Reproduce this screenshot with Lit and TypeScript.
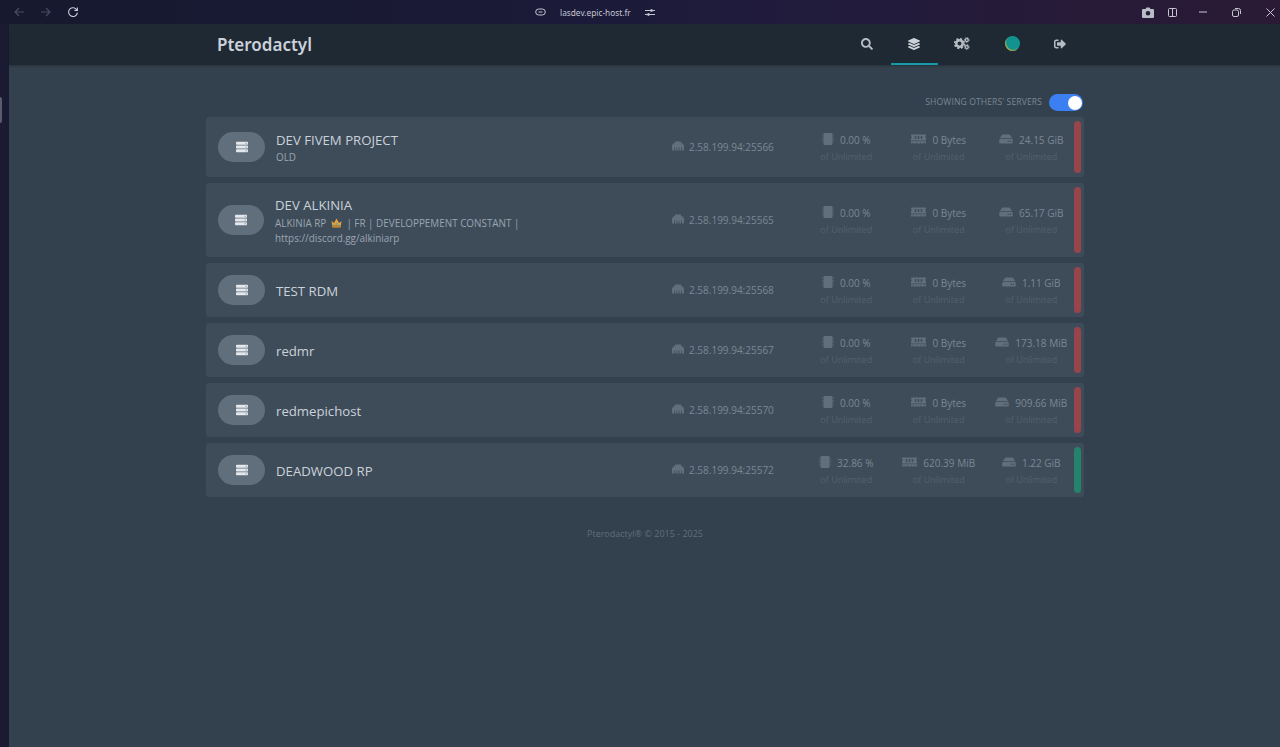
import { LitElement, html, css, svg } from "lit";
import { customElement } from "lit/decorators.js";

const P = {
  search: "M505 442.7L405.3 343c-4.5-4.5-10.6-7-17-7H372c27.6-35.3 44-79.7 44-128C416 93.1 322.9 0 208 0S0 93.1 0 208s93.1 208 208 208c48.3 0 92.7-16.4 128-44v16.3c0 6.4 2.5 12.5 7 17l99.7 99.7c9.4 9.4 24.6 9.4 33.9 0l28.3-28.3c9.4-9.4 9.4-24.6.1-34zM208 336c-70.7 0-128-57.2-128-128 0-70.7 57.2-128 128-128 70.7 0 128 57.2 128 128 0 70.7-57.2 128-128 128z",
  layers: "M12.41 148.02l232.94 105.67c6.8 3.09 14.49 3.09 21.29 0l232.94-105.67c16.55-7.51 16.55-32.52 0-40.03L266.65 2.31a25.607 25.607 0 0 0-21.29 0L12.41 107.98c-16.55 7.51-16.55 32.53 0 40.04zm487.18 88.28l-58.09-26.33-161.64 73.27c-7.56 3.43-15.59 5.17-23.86 5.17s-16.29-1.74-23.86-5.17L70.51 209.97l-58.1 26.33c-16.55 7.5-16.55 32.5 0 40l232.94 105.59c6.8 3.08 14.49 3.08 21.29 0L499.59 276.3c16.55-7.5 16.55-32.5 0-40zm0 127.8l-57.87-26.23-161.86 73.37c-7.56 3.43-15.59 5.17-23.86 5.17s-16.29-1.74-23.86-5.17L70.29 337.87 12.41 364.1c-16.55 7.5-16.55 32.5 0 40l232.94 105.59c6.8 3.08 14.49 3.08 21.29 0L499.59 404.1c16.55-7.5 16.55-32.5 0-40z",
  signout: "M497 273L329 441c-15 15-41 4.5-41-17v-96H152c-13.3 0-24-10.7-24-24v-96c0-13.3 10.7-24 24-24h136V88c0-21.4 25.9-32 41-17l168 168c9.3 9.4 9.3 24.6 0 34zM192 436v-40c0-6.6-5.4-12-12-12H96c-17.7 0-32-14.3-32-32V160c0-17.7 14.3-32 32-32h84c6.6 0 12-5.4 12-12V76c0-6.6-5.4-12-12-12H96c-53 0-96 43-96 96v192c0 53 43 96 96 96h84c6.6 0 12-5.4 12-12z",
  ethernet: "M496 192h-48v-48c0-8.8-7.2-16-16-16h-48V80c0-8.8-7.2-16-16-16H144c-8.8 0-16 7.2-16 16v48H80c-8.8 0-16 7.2-16 16v48H16c-8.8 0-16 7.2-16 16v224c0 8.8 7.2 16 16 16h80V320h32v128h64V320h32v128h64V320h32v128h64V320h32v128h80c8.8 0 16-7.2 16-16V208c0-8.8-7.2-16-16-16z",
  memory: "M640 130.94V96c0-17.67-14.33-32-32-32H32C14.33 64 0 78.33 0 96v34.94c18.6 6.61 32 24.19 32 45.06s-13.4 38.45-32 45.06V320h640v-98.94c-18.6-6.61-32-24.19-32-45.06s13.4-38.45 32-45.06zM224 256h-64V128h64v128zm128 0h-64V128h64v128zm128 0h-64V128h64v128zM0 448h64v-26.67c0-8.84 7.16-16 16-16s16 7.16 16 16V448h128v-26.67c0-8.84 7.16-16 16-16s16 7.16 16 16V448h128v-26.67c0-8.84 7.16-16 16-16s16 7.16 16 16V448h128v-26.67c0-8.84 7.16-16 16-16s16 7.16 16 16V448h64v-96H0v96z",
  hdd: "M576 304v96c0 26.51-21.49 48-48 48H48c-26.51 0-48-21.49-48-48v-96c0-26.51 21.49-48 48-48h480c26.51 0 48 21.49 48 48zm-48-80a79.557 79.557 0 0 1 30.777 6.165L462.25 85.374A48.003 48.003 0 0 0 422.311 64H153.689a48 48 0 0 0-39.938 21.374L17.223 230.165A79.557 79.557 0 0 1 48 224h480zm-48 96c-17.673 0-32 14.327-32 32s14.327 32 32 32 32-14.327 32-32-14.327-32-32-32zm-96 0c-17.673 0-32 14.327-32 32s14.327 32 32 32 32-14.327 32-32-14.327-32-32-32z",
  server: "M480 160H32c-17.7 0-32-14.3-32-32V64c0-17.7 14.3-32 32-32h448c17.7 0 32 14.3 32 32v64c0 17.7-14.3 32-32 32zm-48-88a24 24 0 1 0 0 48 24 24 0 0 0 0-48zM480 320H32c-17.7 0-32-14.3-32-32v-64c0-17.7 14.3-32 32-32h448c17.7 0 32 14.3 32 32v64c0 17.7-14.3 32-32 32zm-48-88a24 24 0 1 0 0 48 24 24 0 0 0 0-48zM480 480H32c-17.7 0-32-14.3-32-32v-64c0-17.7 14.3-32 32-32h448c17.7 0 32 14.3 32 32v64c0 17.7-14.3 32-32 32zm-48-88a24 24 0 1 0 0 48 24 24 0 0 0 0-48z",
  chip: "M448 40v432c0 22-18 40-40 40H104c-22 0-40-18-40-40V40C64 18 82 0 104 0h304c22 0 40 18 40 40zM0 70h48v36H0zm0 96h48v36H0zm0 96h48v36H0zm0 96h48v36H0zM464 70h48v36h-48zm0 96h48v36h-48zm0 96h48v36h-48zm0 96h48v36h-48z",
};

const icon = (d: string, w: number, h: number, vb = 512) =>
  svg`<svg width=${w} height=${h} viewBox="0 0 ${vb} 512" fill="currentColor" fill-rule="evenodd"><path d=${d}></path></svg>`;

const cogs = svg`<svg width="16" height="13" viewBox="0 0 32 26" fill="none" stroke="currentColor">
  <circle cx="11" cy="13" r="6.4" stroke-width="5"></circle>
  <circle cx="11" cy="13" r="9.6" stroke-width="3.4" stroke-dasharray="4.2 3.34"></circle>
  <circle cx="25.5" cy="6" r="3" stroke-width="2.6"></circle>
  <circle cx="25.5" cy="6" r="5" stroke-width="1.6" stroke-dasharray="2 1.9"></circle>
  <circle cx="25.5" cy="20" r="3" stroke-width="2.6"></circle>
  <circle cx="25.5" cy="20" r="5" stroke-width="1.6" stroke-dasharray="2 1.9"></circle>
</svg>`;

const crown = svg`<svg class="crown" width="11" height="10" viewBox="0 0 22 20">
  <path fill="#e8a33a" d="M1 6l5 4 5-9 5 9 5-4-2 13H3z"></path>
  <rect x="3" y="14" width="16" height="4" fill="#c77f22"></rect>
  <circle cx="11" cy="12" r="2" fill="#4aa3c7"></circle>
  <circle cx="6" cy="14" r="1.3" fill="#4aa3c7"></circle>
  <circle cx="16" cy="14" r="1.3" fill="#4aa3c7"></circle>
</svg>`;

interface Srv { name: string; desc?: unknown; ip: string; cpu: string; mem: string; disk: string; on?: boolean; h: number; tight?: boolean; }

const servers: Srv[] = [
  { name: "DEV FIVEM PROJECT", desc: "OLD", ip: "2.58.199.94:25566", cpu: "0.00 %", mem: "0 Bytes", disk: "24.15 GiB", h: 60 },
  { name: "DEV ALKINIA", tight: true, desc: html`ALKINIA RP ${crown} | FR | DEVELOPPEMENT CONSTANT |<br />https://discord.gg/alkiniarp`, ip: "2.58.199.94:25565", cpu: "0.00 %", mem: "0 Bytes", disk: "65.17 GiB", h: 74 },
  { name: "TEST RDM", ip: "2.58.199.94:25568", cpu: "0.00 %", mem: "0 Bytes", disk: "1.11 GiB", h: 54 },
  { name: "redmr", ip: "2.58.199.94:25567", cpu: "0.00 %", mem: "0 Bytes", disk: "173.18 MiB", h: 54 },
  { name: "redmepichost", ip: "2.58.199.94:25570", cpu: "0.00 %", mem: "0 Bytes", disk: "909.66 MiB", h: 54 },
  { name: "DEADWOOD RP", ip: "2.58.199.94:25572", cpu: "32.86 %", mem: "620.39 MiB", disk: "1.22 GiB", on: true, h: 54 },
];

@customElement("app-root")
export class AppRoot extends LitElement {
  static styles = css`
    :host { display: block; font-family: "Open Sans", "Noto Sans", sans-serif; }
    * { box-sizing: border-box; }
    .frame {
      height: 747px; display: grid; grid-template-columns: 9px 1fr; grid-template-rows: 24px 1fr;
      background: #1a1a33; overflow: hidden;
    }
    .chrome {
      grid-column: 1 / 3; display: flex; align-items: center; position: relative;
      background: linear-gradient(90deg, #17192f 0%, #1b1a38 45%, #201b3c 60%, #2a1a35 100%);
      color: #c9ccd6;
    }
    .nav-btns { display: flex; align-items: center; gap: 15px; padding-left: 13px; }
    .nav-btns svg { display: block; }
    .dim { color: #4a4c66; }
    .url {
      position: absolute; left: 535px; top: 0; height: 24px; display: flex; align-items: center;
      font-size: 8.3px; color: #c4c6d2; font-family: "Noto Sans", sans-serif;
    }
    .url span { margin: 0 14px; }
    .win { margin-left: auto; display: flex; align-items: center; padding-right: 5px; color: #c6c8d0; }
    .win svg { display: block; }
    .m14 { margin-right: 14px; }
    .m22 { margin-right: 22px; }
    .m25 { margin-right: 25px; }
    .side { position: relative; }
    .mark {
      position: absolute; left: 0; top: 73px; width: 2px; height: 26px;
      background: #5a5d6c; border-radius: 0 2px 2px 0;
    }
    main { background: #33404d; display: flex; flex-direction: column; min-width: 0; }
    header {
      height: 41px; background: #1f2933; display: flex; align-items: center;
      box-shadow: 0 1px 2px rgba(0,0,0,.25); padding-left: 208px;
    }
    .brand { font-size: 17px; font-weight: 600; color: #cbd2d9; width: 626px; font-family: "Noto Sans", sans-serif; }
    .tabs { display: flex; height: 100%; }
    .tab { width: 47.5px; display: flex; align-items: center; justify-content: center; color: #b5bcc4; padding-bottom: 2px; }
    .tab.wide { width: 50.5px; padding-left: 3px; }
    .tab.active { color: #cbd2d9; box-shadow: inset 0 -2px 0 #1699a8; }
    .tab svg { display: block; }
    .avatar {
      width: 15px; height: 15px; border-radius: 50%;
      background: radial-gradient(circle at 60% 45%, #11948f 0 65%, #0f8a8a 100%);
      box-shadow: inset 1px -1px 0 #a3a34a;
    }
    .content { width: 878px; margin-left: 197px; display: flex; flex-direction: column; }
    .toggle-row {
      display: flex; justify-content: flex-end; align-items: center; gap: 7px;
      margin-top: 29px; height: 17px; margin-bottom: 6px; padding-right: 1px;
    }
    .toggle-row span { font-size: 8.6px; color: #7b8794; text-transform: uppercase; letter-spacing: .1px; padding-bottom: 2px; }
    .switch {
      width: 34px; height: 17px; border-radius: 9px; background: #3b7ff0; display: flex;
      justify-content: flex-end; align-items: center; padding-right: 1.500px;
    }
    .switch i { width: 14px; height: 14px; border-radius: 50%; background: #fff; display: block; }
    .list { display: flex; flex-direction: column; gap: 6px; }
    .row {
      display: flex; align-items: center; background: #3e4c59; border-radius: 3px;
      padding: 4px 3px 4px 12px;
    }
    .pill {
      flex: 0 0 47px; height: 30px; border-radius: 15px; background: #616e7c;
      display: flex; align-items: center; justify-content: center; color: #e4e7eb;
    }
    .pill svg { display: block; }
    .info { flex: 0 0 407px; padding-left: 11px; min-width: 0; display: flex; flex-direction: column; margin-top: 2px; }
    .tight .pill { flex-basis: 46px; }
    .tight .info { flex-basis: 408px; }
    .name { font-size: 13.2px; line-height: 18px; color: #cbd2d9; }
    .desc { font-size: 9.9px; line-height: 15px; color: #9aa5b1; margin-top: 1.5px; width: 260px; }
    .crown { vertical-align: -1px; margin: 0 2px; }
    .ip { flex: 0 0 128px; display: flex; align-items: center; gap: 5px; font-size: 10px; color: #7b8794; }
    .ip svg { color: #616e7c; display: block; margin-top: -2px; }
    .stat { flex: 0 0 92.5px; text-align: center; margin-top: 2px; }
    .val { display: flex; align-items: center; justify-content: center; gap: 6px; font-size: 10px; line-height: 14px; color: #7b8794; height: 14px; }
    .val svg { color: #616e7c; display: block; margin-top: -3px; }
    .of { font-size: 9px; line-height: 12px; color: #52606d; margin-top: 4px; }
    .bar { flex: 0 0 7px; align-self: stretch; border-radius: 3.5px; background: #98444b; margin-left: -3.5px; position: relative; }
    .bar.on { background: #25826b; }
    footer { text-align: center; font-size: 9px; color: #616e7c; margin-top: 31px; line-height: 12px; }
  `;

  render() {
    return html`
      <div class="frame">
        <div class="chrome">
          <div class="nav-btns">
            <svg class="dim" width="12" height="12" viewBox="0 0 12 12" fill="none" stroke="currentColor" stroke-width="1.1"><path d="M11 6H2M6 2L2 6l4 4"></path></svg>
            <svg class="dim" width="12" height="12" viewBox="0 0 12 12" fill="none" stroke="currentColor" stroke-width="1.1"><path d="M1 6h9M6 2l4 4-4 4"></path></svg>
            <svg width="12" height="12" viewBox="0 0 12 12" fill="none" stroke="currentColor" stroke-width="1.1"><path d="M10 4.2A4.4 4.4 0 1 0 10.4 6.6"></path><path d="M10.4 1.4v3H7.4"></path></svg>
          </div>
          <div class="url">
            <svg width="11" height="8" viewBox="0 0 11 8" fill="none" stroke="currentColor" stroke-width="1"><rect x=".7" y="1" width="9.6" height="6" rx="3"></rect><path d="M3.5 4h4"></path></svg>
            <span>lasdev.epic-host.fr</span>
            <svg width="10" height="9" viewBox="0 0 10 9" fill="none" stroke="currentColor" stroke-width="1"><path d="M0 2.5h10M0 6.5h10"></path><circle cx="6.5" cy="2.5" r="1" fill="currentColor"></circle><circle cx="3.5" cy="6.5" r="1" fill="currentColor"></circle></svg>
          </div>
          <div class="win">
            <svg class="m14" width="12" height="11" viewBox="0 0 12 11"><path fill="#b9bcc6" fill-rule="evenodd" d="M1 2h2.5l1-1.5h3L8.500 2H11a1 1 0 0 1 1 1v7a1 1 0 0 1-1 1H1a1 1 0 0 1-1-1V3a1 1 0 0 1 1-1zm5 2a2.300 2.300 0 1 0 0 4.600A2.300 2.300 0 0 0 6 4z"></path></svg>
            <svg class="m22" width="9" height="9" viewBox="0 0 9 9" fill="none" stroke="currentColor"><rect x=".5" y=".5" width="8" height="8" rx="1"></rect><path d="M4.500 .5v8"></path></svg>
            <svg class="m25" width="8" height="8" viewBox="0 0 8 8" fill="none" stroke="currentColor"><path d="M0 4h8"></path></svg>
            <svg class="m25" width="9" height="9" viewBox="0 0 9 9" fill="none" stroke="currentColor"><rect x=".5" y="2" width="6" height="6.500" rx="1.500"></rect><path d="M3 .5h3.500a2 2 0 0 1 2 2V6"></path></svg>
            <svg width="9" height="9" viewBox="0 0 9 9" fill="none" stroke="currentColor"><path d="M.5.500l8 8M8.500.500l-8 8"></path></svg>
          </div>
        </div>
        <div class="side"><div class="mark"></div></div>
        <main>
          <header>
            <div class="brand">Pterodactyl</div>
            <div class="tabs">
              <div class="tab">${icon(P.search, 12, 12)}</div>
              <div class="tab active">${icon(P.layers, 12, 12)}</div>
              <div class="tab">${cogs}</div>
              <div class="tab wide"><div class="avatar"></div></div>
              <div class="tab">${icon(P.signout, 12, 12)}</div>
            </div>
          </header>
          <div class="content">
            <div class="toggle-row"><span>Showing others' servers</span><div class="switch"><i></i></div></div>
            <div class="list">
              ${servers.map(s => html`
                <div class="row ${s.tight ? "tight" : ""}" style="height:${s.h}px">
                  <div class="pill">${icon(P.server, 12, 12)}</div>
                  <div class="info">
                    <div class="name">${s.name}</div>
                    ${s.desc ? html`<div class="desc">${s.desc}</div>` : ""}
                  </div>
                  <div class="ip">${icon(P.ethernet, 12, 12)}<span>${s.ip}</span></div>
                  ${this.stat(icon(P.chip, 12, 12), s.cpu)}
                  ${this.stat(icon(P.memory, 15, 12, 640), s.mem)}
                  ${this.stat(icon(P.hdd, 14, 12, 576), s.disk)}
                  <div class="bar ${s.on ? "on" : ""}"></div>
                </div>`)}
            </div>
            <footer>Pterodactyl® © 2015 - 2025</footer>
          </div>
        </main>
      </div>
    `;
  }

  stat(ic: unknown, v: string) {
    return html`<div class="stat"><div class="val">${ic}<span>${v}</span></div><div class="of">of Unlimited</div></div>`;
  }
}
